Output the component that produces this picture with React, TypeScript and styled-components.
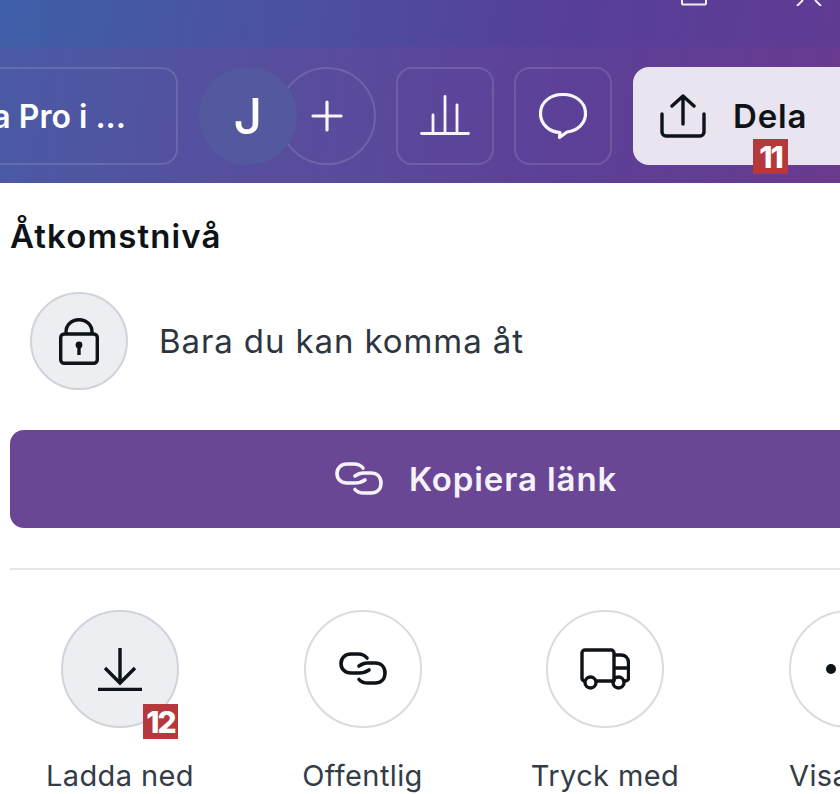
import React from "react";
import styled, { createGlobalStyle } from "styled-components";

const Global = createGlobalStyle`
  html, body { margin: 0; padding: 0; background: #fff; }
  body { font-family: Inter, "Noto Sans", sans-serif; overflow: hidden; }
`;

const Page = styled.div`
  position: relative;
  width: 840px;
  height: 794px;
  overflow: hidden;
  background: #fff;
`;

const Header = styled.header`
  height: 183px;
  background: linear-gradient(98deg, #3f5fa8 0%, #4c50a0 35%, #55409a 62%, #613b92 100%);
`;

const TitleStrip = styled.div`
  height: 47px;
  display: flex;
  justify-content: flex-end;
  align-items: flex-start;
  gap: 89px;
  padding-right: 18px;
`;

const WindowIcon = styled.svg`
  display: block;
  color: #f2eef7;
`;

const Toolbar = styled.div`
  height: 136px;
  box-sizing: border-box;
  padding-top: 20px;
  display: flex;
  align-items: flex-start;
  background: linear-gradient(98deg, #4a5aa4 0%, #5a4b9c 40%, #5c4097 68%, #693a90 100%);
`;

const ProButton = styled.div`
  flex: none;
  box-sizing: border-box;
  width: 200px;
  height: 98px;
  margin-left: -22px;
  padding-right: 50px;
  display: flex;
  align-items: center;
  justify-content: flex-end;
  border: 2px solid rgba(255, 255, 255, 0.13);
  border-radius: 16px;
  color: #fff;
  font-size: 32px;
  font-weight: 600;
  white-space: nowrap;
`;

const Collaborators = styled.div`
  flex: none;
  display: flex;
  margin-left: 21px;
`;

const Avatar = styled.div`
  position: relative;
  z-index: 1;
  flex: none;
  width: 98px;
  height: 98px;
  border-radius: 50%;
  background: #54589f;
  color: #fff;
  font-size: 50px;
  font-weight: 500;
  display: flex;
  align-items: center;
  justify-content: center;
`;

const AddCircle = styled.div`
  flex: none;
  box-sizing: border-box;
  width: 98px;
  height: 98px;
  margin-left: -19px;
  border: 2px solid rgba(255, 255, 255, 0.13);
  border-radius: 50%;
  display: flex;
  align-items: center;
  justify-content: center;
`;

const IconButton = styled.div`
  flex: none;
  box-sizing: border-box;
  width: 98px;
  height: 98px;
  margin-left: 20px;
  border: 2px solid rgba(255, 255, 255, 0.13);
  border-radius: 16px;
  display: flex;
  align-items: center;
  justify-content: center;
`;

const ShareButton = styled.div`
  flex: none;
  box-sizing: border-box;
  width: 230px;
  height: 98px;
  margin-left: 21px;
  padding-left: 27px;
  border-radius: 16px;
  background: #e9e4f0;
  color: #0e1318;
  display: flex;
  align-items: center;
  gap: 27px;
  font-size: 33px;
  font-weight: 600;
  letter-spacing: 0.8px;
`;

const Panel = styled.main`
  padding: 32px 0 0 10px;
`;

const SectionTitle = styled.h2`
  margin: 0;
  color: #0e1318;
  font-size: 33px;
  line-height: 42px;
  font-weight: 600;
  letter-spacing: 1.1px;
`;

const AccessRow = styled.div`
  display: flex;
  align-items: center;
  gap: 31px;
  margin: 35px 0 0 20px;
`;

const LockCircle = styled.div`
  flex: none;
  box-sizing: border-box;
  width: 98px;
  height: 98px;
  border-radius: 50%;
  background: #eceef1;
  border: 2px solid #cfd4da;
  display: flex;
  align-items: center;
  justify-content: center;
`;

const AccessText = styled.span`
  color: #2d3640;
  font-size: 33px;
  letter-spacing: 0.9px;
  white-space: nowrap;
`;

const CopyButton = styled.div`
  box-sizing: border-box;
  width: 860px;
  height: 98px;
  margin-top: 40px;
  padding-left: 325px;
  border-radius: 14px;
  background: #6a4795;
  color: #f6f2fa;
  display: flex;
  align-items: center;
  gap: 26px;
  font-size: 33px;
  font-weight: 600;
  letter-spacing: 0.9px;
  white-space: nowrap;
`;

const Divider = styled.hr`
  margin: 40px 0 0;
  border: 0;
  height: 2px;
  background: #e4e7ea;
`;

const Actions = styled.div`
  display: flex;
  gap: 124.5px;
  margin: 40px 0 0 51px;
`;

const Action = styled.div`
  flex: none;
  width: 118px;
  display: flex;
  flex-direction: column;
  align-items: center;
`;

const ActionCircle = styled.div<{ $active?: boolean }>`
  box-sizing: border-box;
  width: 118px;
  height: 118px;
  border-radius: 50%;
  border: 2px solid ${(p) => (p.$active ? "#cfd4da" : "#d8dce1")};
  background: ${(p) => (p.$active ? "#eceef1" : "#fff")};
  display: flex;
  align-items: center;
  justify-content: center;
  gap: 7px;
`;

const ActionLabel = styled.span`
  margin-top: 28px;
  color: #333c47;
  font-size: 29px;
  letter-spacing: 0.4px;
  line-height: 40px;
  white-space: nowrap;
`;

const Dot = styled.span`
  flex: none;
  width: 10px;
  height: 10px;
  border-radius: 50%;
  background: #0e1318;
`;

const Marker = styled.div<{ $left: number; $top: number }>`
  position: absolute;
  left: ${(p) => p.$left}px;
  top: ${(p) => p.$top}px;
  width: 35px;
  height: 35px;
  background: #b5383c;
  color: #fff;
  font-size: 30px;
  font-weight: 800;
  letter-spacing: -2px;
  display: flex;
  align-items: center;
  justify-content: center;
`;

const LinkIcon = ({ size = 48, color = "#0e1318" }: { size?: number; color?: string }) => (
  <svg width={size} height={(size * 34) / 48} viewBox="0 0 48 34" fill="none" stroke={color} strokeWidth="3.6" strokeLinecap="round">
    <path d="M28 6C26 3.5 23 2 19 2H12C6 2 2 6 2 11.5S6 21 12 21H20C24 21 27 20 30 18" />
    <path d="M20 14C23 12 25 11 28 11H36C42 11 46 15 46 21S42 31 36 31H29C25 31 22 30 20 27.5" />
  </svg>
);

export default function App() {
  return (
    <Page>
      <Global />
      <Header>
        <TitleStrip>
          <WindowIcon width="26" height="6" viewBox="0 0 26 6" fill="none" stroke="currentColor" strokeWidth="2">
            <path d="M1 -6V3.5a1 1 0 0 0 1 1H24a1 1 0 0 0 1-1V-6" />
          </WindowIcon>
          <WindowIcon width="26" height="6" viewBox="0 0 26 6" fill="none" stroke="currentColor" strokeWidth="2">
            <path d="M1 6L7 0M25 6L19 0" />
          </WindowIcon>
        </TitleStrip>
        <Toolbar>
          <ProButton>Prova Canva Pro i ...</ProButton>
          <Collaborators>
            <Avatar>J</Avatar>
            <AddCircle>
              <svg width="32" height="32" viewBox="0 0 32 32" stroke="#f7f4fa" strokeWidth="3.2" strokeLinecap="round">
                <path d="M16 2V30M2 16H30" />
              </svg>
            </AddCircle>
          </Collaborators>
          <IconButton>
            <svg width="50" height="42" viewBox="0 0 50 42" fill="none" stroke="#f7f4fa" strokeWidth="2.8" strokeLinecap="round">
              <path d="M1.5 38.5H48.5M13 38.5V20M25 38.5V1.5M37 38.5V10" />
            </svg>
          </IconButton>
          <IconButton>
            <svg width="48" height="46" viewBox="0 0 48 46" fill="none" stroke="#f7f4fa" strokeWidth="3.2" strokeLinejoin="round">
              <path d="M24 1.5C11 1.5 1.5 9.5 1.5 20.5C1.5 31 10 39 21 39.5L20.5 44.5L28 39C39 38 46.5 30 46.5 20.5C46.5 9.5 37 1.5 24 1.5Z" />
            </svg>
          </IconButton>
          <ShareButton>
            <svg width="46" height="44" viewBox="0 0 46 44" fill="none" stroke="#0e1318" strokeWidth="3.4" strokeLinecap="round" strokeLinejoin="round">
              <path d="M2 20V38a4 4 0 0 0 4 4H40a4 4 0 0 0 4-4V20" />
              <path d="M23 30V2M12 12L23 2L34 12" />
            </svg>
            Dela
          </ShareButton>
        </Toolbar>
      </Header>
      <Panel>
        <SectionTitle>Åtkomstnivå</SectionTitle>
        <AccessRow>
          <LockCircle>
            <svg width="40" height="47" viewBox="0 0 40 47" fill="none" stroke="#0e1318" strokeWidth="3.4">
              <rect x="1.7" y="16" width="36.6" height="29.3" rx="3.5" />
              <path d="M7 16V14C7 7 12.5 1.7 20 1.7S33 7 33 14V16" />
              <circle cx="20" cy="27" r="3.4" fill="#0e1318" stroke="none" />
              <path d="M20 28V37" />
            </svg>
          </LockCircle>
          <AccessText>Bara du kan komma åt</AccessText>
        </AccessRow>
        <CopyButton>
          <LinkIcon color="#f6f2fa" />
          Kopiera länk
        </CopyButton>
        <Divider />
        <Actions>
          <Action>
            <ActionCircle $active>
              <svg width="46" height="44" viewBox="0 0 46 44" fill="none" stroke="#0e1318" strokeWidth="3.4">
                <path d="M23 1V35M8 21L23 36L38 21" />
                <path d="M1 42.5H45" />
              </svg>
            </ActionCircle>
            <ActionLabel>Ladda ned</ActionLabel>
          </Action>
          <Action>
            <ActionCircle>
              <LinkIcon />
            </ActionCircle>
            <ActionLabel>Offentlig</ActionLabel>
          </Action>
          <Action>
            <ActionCircle>
              <svg width="50" height="42" viewBox="0 0 50 42" fill="none" stroke="#0e1318" strokeWidth="3.4" strokeLinejoin="round">
                <path d="M4.5 33C3 33 2 32 2 30V5a3 3 0 0 1 3-3H31a3 3 0 0 1 3 3V33H16" />
                <path d="M34 7H41C46 7 48.5 11 48.5 15V30a3 3 0 0 1-3 3H44M34 20H48.5" />
                <circle cx="10.5" cy="34.5" r="5.5" />
                <circle cx="38.5" cy="34.5" r="5.5" />
              </svg>
            </ActionCircle>
            <ActionLabel>Tryck med</ActionLabel>
          </Action>
          <Action>
            <ActionCircle>
              <Dot />
              <Dot />
              <Dot />
            </ActionCircle>
            <ActionLabel>Visa alla</ActionLabel>
          </Action>
        </Actions>
      </Panel>
      <Marker $left={753} $top={139}>11</Marker>
      <Marker $left={143} $top={704}>12</Marker>
    </Page>
  );
}
